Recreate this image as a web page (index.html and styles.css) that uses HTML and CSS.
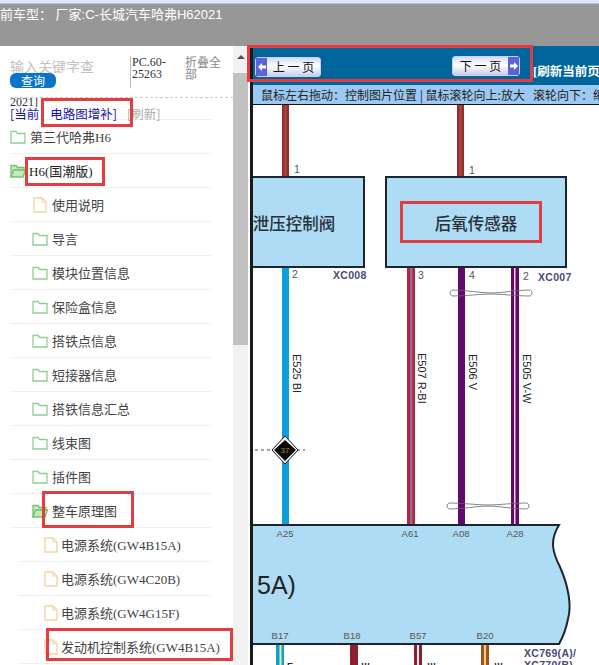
FILE: index.html
```html
<!DOCTYPE html>
<html lang="zh">
<head>
<meta charset="utf-8">
<title>电路图</title>
<link rel="stylesheet" href="styles.css">
</head>
<body>
<svg class="defs" width="0" height="0" aria-hidden="true">
  <symbol id="folder" viewBox="0 0 16 14"><path d="M1 13V1.500h5l1.500 2H15V13Z" fill="#fff" stroke="#8fd08f" stroke-width="1.300"/></symbol>
  <symbol id="folder-open" viewBox="0 0 16 14"><path d="M1 13V1.500h5l1.500 2H14V6" fill="#c5e8b8" stroke="#74c070" stroke-width="1.300"/><path d="M1 13 3.500 6H15.500L13 13Z" fill="#c5e8b8" stroke="#74c070" stroke-width="1.300"/></symbol>
  <symbol id="file" viewBox="0 0 14 16"><path d="M1 1h8l4 4v10H1Z" fill="#fff" stroke="#f6d3aa" stroke-width="1.400"/><path d="M9 1v4h4" fill="none" stroke="#f6d3aa" stroke-width="1.200"/></symbol>
</svg>
<div class="page">
  <header class="topbar"><span class="topbar-text">当前车型： 厂家:C-长城汽车哈弗H62021</span></header>
  <div class="body-row">
    <aside class="side">
      <div class="side-scroll">
        <div class="search">
          <div class="search-left">
            <div class="search-input">输入关键字查询</div>
            <div class="search-btn">查询</div>
          </div>
          <div class="search-code">PC.60-25263</div>
          <div class="search-fold">折叠全部</div>
        </div>
        <div class="year">2021]</div>
        <div class="links"><span class="link-blue">[当前</span><span class="link-blue link-add">电路图增补]</span><span class="link-gray">[刷新]</span></div>
        <ul class="tree">
          <li class="row l1"><svg class="ic-folder"><use href="#folder"/></svg>第三代哈弗H6</li>
          <li class="row l1 tight"><svg class="ic-folder"><use href="#folder-open"/></svg>H6(国潮版)</li>
          <li class="row l2 has-file"><svg class="ic-file"><use href="#file"/></svg>使用说明</li>
          <li class="row l2"><svg class="ic-folder"><use href="#folder"/></svg>导言</li>
          <li class="row l2"><svg class="ic-folder"><use href="#folder"/></svg>模块位置信息</li>
          <li class="row l2"><svg class="ic-folder"><use href="#folder"/></svg>保险盒信息</li>
          <li class="row l2"><svg class="ic-folder"><use href="#folder"/></svg>搭铁点信息</li>
          <li class="row l2"><svg class="ic-folder"><use href="#folder"/></svg>短接器信息</li>
          <li class="row l2"><svg class="ic-folder"><use href="#folder"/></svg>搭铁信息汇总</li>
          <li class="row l2"><svg class="ic-folder"><use href="#folder"/></svg>线束图</li>
          <li class="row l2"><svg class="ic-folder"><use href="#folder"/></svg>插件图</li>
          <li class="row l2"><svg class="ic-folder"><use href="#folder-open"/></svg>整车原理图</li>
          <li class="row l3"><svg class="ic-file"><use href="#file"/></svg>电源系统(GW4B15A)</li>
          <li class="row l3"><svg class="ic-file"><use href="#file"/></svg>电源系统(GW4C20B)</li>
          <li class="row l3"><svg class="ic-file"><use href="#file"/></svg>电源系统(GW4G15F)</li>
          <li class="row l3"><svg class="ic-file"><use href="#file"/></svg>发动机控制系统(GW4B15A)</li>
        </ul>
      </div>
      <div class="scrollbar">
        <div class="sb-up"></div>
        <div class="sb-thumb"></div>
      </div>
    </aside>
    <main class="main">
      <div class="toolbar">
        <div class="pager">
          <div class="page-btn prev"><span class="arrow">
            <svg width="10" height="10" viewBox="0 0 10 10"><path d="M1 5 5 1v2.500h4v3H5V9Z" fill="#fff"/></svg></span><span class="btn-label">上 一 页</span></div>
          <div class="page-btn next"><span class="btn-label">下 一 页</span><span class="arrow">
            <svg width="10" height="10" viewBox="0 0 10 10"><path d="M9 5 5 1v2.500H1v3h4V9Z" fill="#fff"/></svg></span></div>
        </div>
        <div class="refresh">[刷新当前页]</div>
      </div>
      <div class="hint">鼠标左右拖动：控制图片位置 | 鼠标滚轮向上:放大&nbsp;&nbsp; 滚轮向下：缩小</div>
      <div class="canvas">
        <svg class="diagram" width="346" height="561" viewBox="253 104 346 561">
          <rect x="282" y="104" width="7" height="72" fill="#a9242a"/><rect x="284.500" y="104" width="2" height="72" fill="#8a5a4a"/>
          <rect x="457" y="104" width="7" height="72" fill="#a9242a"/><rect x="459.500" y="104" width="2" height="72" fill="#8a5a4a"/>
          <rect x="282" y="266" width="7" height="258" fill="#0f9fdc"/>
          <rect x="407" y="266" width="8" height="258" fill="#b8243c"/><rect x="410" y="266" width="2.500" height="258" fill="#8d6a9a"/>
          <rect x="458" y="266" width="7" height="258" fill="#65086c"/>
          <rect x="511" y="266" width="8" height="258" fill="#65086c"/><rect x="514" y="266" width="1.500" height="258" fill="#e8d8ec"/>
          <rect x="240" y="176" width="124" height="90" class="box"/>
          <rect x="386" y="176" width="180" height="90" class="box"/>
          <path d="M240 524H559C549 540 553 552 560 566 568 584 572 604 568 618 566 628 563 636 559 643H240Z" class="box"/>
          <path d="M453 289c-4 0-4 6 0 6 14 0 26-2 38-2 12 0 24 2 38 2 4 0 4-6 0-6-14 0-26 3-38 3-12 0-24-3-38-3Z" class="twist"/>
          <path d="M450 502c-4 0-4 6 0 6 14 0 26-3 38-3 12 0 24 3 38 3 4 0 4-6 0-6-14 0-26 2-38 2-12 0-24-2-38-2Z" class="twist"/>
          <line x1="255" y1="449" x2="305" y2="449" class="dash"/>
          <path d="M285 435 298 449 285 463 272 449Z" fill="#fff" stroke="#111" stroke-width="1"/>
          <path d="M285 439 296 449 285 460 274 449Z" fill="#0a0a0a"/>
          <text x="285" y="452" class="t-splice">37</text>
          <text x="294" y="229" class="t-title">泄压控制阀</text>
          <text x="476" y="229" class="t-title">后氧传感器</text>
          <text x="297" y="172" class="t-pin">1</text><text x="472" y="173" class="t-pin">1</text>
          <text x="295" y="277" class="t-pin">2</text>
          <text x="421" y="278" class="t-pin">3</text><text x="472" y="278" class="t-pin">4</text><text x="526" y="279" class="t-pin">2</text>
          <text x="333" y="278" class="t-conn">XC008</text><text x="538" y="280" class="t-conn">XC007</text>
          <text class="t-wire" transform="translate(293 353) rotate(90)">E525 BI</text>
          <text class="t-wire" transform="translate(418 352) rotate(90)">E507 R-BI</text>
          <text class="t-wire" transform="translate(469 353) rotate(90)">E506 V</text>
          <text class="t-wire" transform="translate(523 353) rotate(90)">E505 V-W</text>
          <text x="285" y="536" class="t-lab">A25</text><text x="410" y="536" class="t-lab">A61</text>
          <text x="461" y="536" class="t-lab">A08</text><text x="515" y="536" class="t-lab">A28</text>
          <text x="280" y="638" class="t-lab">B17</text><text x="352" y="638" class="t-lab">B18</text>
          <text x="418" y="638" class="t-lab">B57</text><text x="485" y="638" class="t-lab">B20</text>
          <text x="257" y="593" class="t-big">5A)</text>
          <rect x="276" y="644" width="8" height="21" fill="#0f9fdc"/><rect x="279.500" y="644" width="2" height="21" fill="#e8f08a"/>
          <rect x="350" y="644" width="8" height="21" fill="#8e1f2e"/>
          <rect x="414" y="644" width="8" height="21" fill="#8e1f2e"/><rect x="417" y="644" width="2" height="21" fill="#eee"/>
          <rect x="481" y="644" width="8" height="21" fill="#a8501a"/><rect x="484" y="644" width="2" height="21" fill="#f5d58a"/>
          <text x="287" y="668" class="t-stub">E</text><text x="361" y="668" class="t-stub">!!!</text>
          <text x="427" y="668" class="t-stub">!!!</text><text x="494" y="668" class="t-stub">!!!</text>
          <text x="524" y="656" class="t-conn">XC769(A)/</text><text x="524" y="668" class="t-conn">XC770(B)</text>
        </svg>
      </div>
    </main>
  </div>
  <div class="mark mark-nav"></div>
  <div class="mark mark-link"></div>
  <div class="mark mark-h6"></div>
  <div class="mark mark-sensor"></div>
  <div class="mark mark-whole"></div>
  <div class="mark mark-engine"></div>
</div>
</body>
</html>
```
FILE: styles.css
```css
* { box-sizing: border-box; }
html, body { margin: 0; padding: 0; }
body { font-family: "Liberation Serif", "Noto Sans CJK SC", serif; background: #fff; }
.defs { position: absolute; }
.page { position: relative; width: 599px; height: 665px; overflow: hidden; }

.topbar { height: 46px; background: linear-gradient(#dfe7f4 0, #dfe7f4 3px, #8e9bb8 4px, #979797 6px, #979797 100%); color: #fff; padding-top: 7px; overflow: hidden; }
.topbar-text { display: block; margin-left: -13px; font: 13px/15px "Liberation Sans", "Noto Sans CJK SC", sans-serif; white-space: nowrap; }

.body-row { display: flex; height: 619px; }
.side { width: 248px; display: flex; flex: none; background: #fff; }
.side-scroll { width: 233px; flex: none; overflow: hidden; }

.search { height: 52px; margin-left: 10px; padding-top: 10px; display: flex; border-bottom: 1px dashed #ccc; }
.search-left { width: 120px; flex: none; padding-top: 3px; }
.search-input { width: 84px; height: 14px; overflow: hidden; white-space: nowrap; font: 14px/14px "Noto Sans CJK SC", sans-serif; color: #c2c2c2; }
.search-btn { width: 46px; height: 15px; background: #0a74c8; border-radius: 6px; color: #fff; text-align: center; font: 12px/15px "Noto Sans CJK SC", sans-serif; }
.search-code { width: 55px; height: 32px; flex: none; padding-left: 1px; border-left: 1px solid #bbb; font-size: 12px; line-height: 12px; color: #333; }
.search-fold { width: 38px; flex: none; font: 12px/12px "Noto Sans CJK SC", sans-serif; color: #888; }

.year { height: 9px; margin-left: 10px; overflow: hidden; font-size: 12px; line-height: 8px; color: #333; }
.links { height: 13px; margin: 0 21px 0 10px; border-bottom: 1px solid #f0f0f0; font: 12.500px/13px "Noto Sans CJK SC", sans-serif; white-space: nowrap; display: flex; }
.link-blue { color: #1414a8; }
.link-add { margin: 0 10px 0 11px; }
.link-gray { color: #aaa; }

.tree { list-style: none; margin: 0; padding: 0; }
.row { height: 34px; display: flex; align-items: center; margin-right: 21px; border-bottom: 1px solid #f1f1f1; font-size: 13px; color: #444; white-space: nowrap; }
.l1 { margin-left: 10px; gap: 4px; }
.l1.tight { gap: 3px; color: #222; }
.l2 { margin-left: 10px; padding-left: 22px; gap: 4px; }
.l2.has-file { padding-left: 23px; gap: 5px; }
.l3 { margin-left: 18px; padding-left: 26px; gap: 3px; margin-right: 0; width: 194px; }
.ic-folder { width: 16px; height: 14px; flex: none; }
.ic-file { width: 14px; height: 16px; flex: none; }

.scrollbar { width: 15px; flex: none; background: #f1f1f1; display: flex; flex-direction: column; }
.sb-up { height: 27px; position: relative; background: #f1f1f1; }
.sb-up::before { content: ""; position: absolute; left: 4px; top: 9px; border: 4px solid transparent; border-top: 0; border-bottom: 4px solid #505050; }
.sb-thumb { height: 272px; background: #c1c1c1; }

.main { flex: 1; display: flex; flex-direction: column; min-width: 0; margin-left: 2px; border-left: 3px solid #1a1a1a; }
.toolbar { height: 39px; flex: none; background: #00659b; display: flex; white-space: nowrap; }
.pager { width: 267px; flex: none; display: flex; justify-content: space-between; align-items: flex-start; padding: 11px 0 0 2px; }
.page-btn { height: 20px; display: flex; align-items: center; background: linear-gradient(#d5daf2, #fff 45%, #c6cdee); border: 1px solid #c7d0ee; border-radius: 3px; font: 12px/18px "Noto Sans CJK SC", sans-serif; color: #111; }
.prev { width: 66px; }
.next { width: 68px; margin-top: -1px; }
.arrow { width: 11px; height: 18px; flex: none; background: #5a63d8; display: flex; align-items: center; justify-content: center; }
.btn-label { flex: 1; text-align: center; }
.refresh { margin-left: 13px; padding-top: 17px; font-size: 12.500px; font-weight: 700; line-height: 18px; color: #fff; }
.hint { height: 20px; flex: none; padding-left: 8px; background: #9cc9f2; border-bottom: 1px solid #111; font: 12px/19px "Noto Sans CJK SC", sans-serif; color: #222; white-space: nowrap; overflow: hidden; }
.canvas { flex: 1; overflow: hidden; background: #fff; }
.diagram { display: block; }

.box { fill: #aedcf5; stroke: #1c2630; stroke-width: 2; }
.twist { fill: none; stroke: #666; stroke-width: .8; }
.dash { stroke: #444; stroke-width: 1; stroke-dasharray: 3 3; }
.t-title { font: 500 16.500px "Noto Sans CJK SC", sans-serif; fill: #2a3038; text-anchor: middle; }
.t-pin { font: 10.500px "Liberation Sans", sans-serif; fill: #555; text-anchor: middle; }
.t-conn { font: 700 10.500px "Liberation Sans", sans-serif; fill: #4a4a78; letter-spacing: .3px; }
.t-wire { font: 400 11px "Liberation Sans", sans-serif; fill: #222; }
.t-lab { font: 9.500px "Liberation Sans", sans-serif; fill: #555; text-anchor: middle; }
.t-big { font: 25px "Liberation Sans", sans-serif; fill: #222; }
.t-splice { font: 8px "Liberation Sans", sans-serif; fill: #a08a50; text-anchor: middle; }
.t-stub { font: 700 9px "Liberation Sans", sans-serif; fill: #222; }

.mark { position: absolute; border: 3px solid #e33d42; }
.mark-nav { left: 247px; top: 45px; width: 286px; height: 37px; }
.mark-link { left: 41px; top: 98px; width: 92px; height: 29px; }
.mark-h6 { left: 25px; top: 157px; width: 80px; height: 29px; }
.mark-sensor { left: 400px; top: 201px; width: 142px; height: 42px; }
.mark-whole { left: 42px; top: 491px; width: 92px; height: 37px; }
.mark-engine { left: 46px; top: 628px; width: 187px; height: 33px; }
```
